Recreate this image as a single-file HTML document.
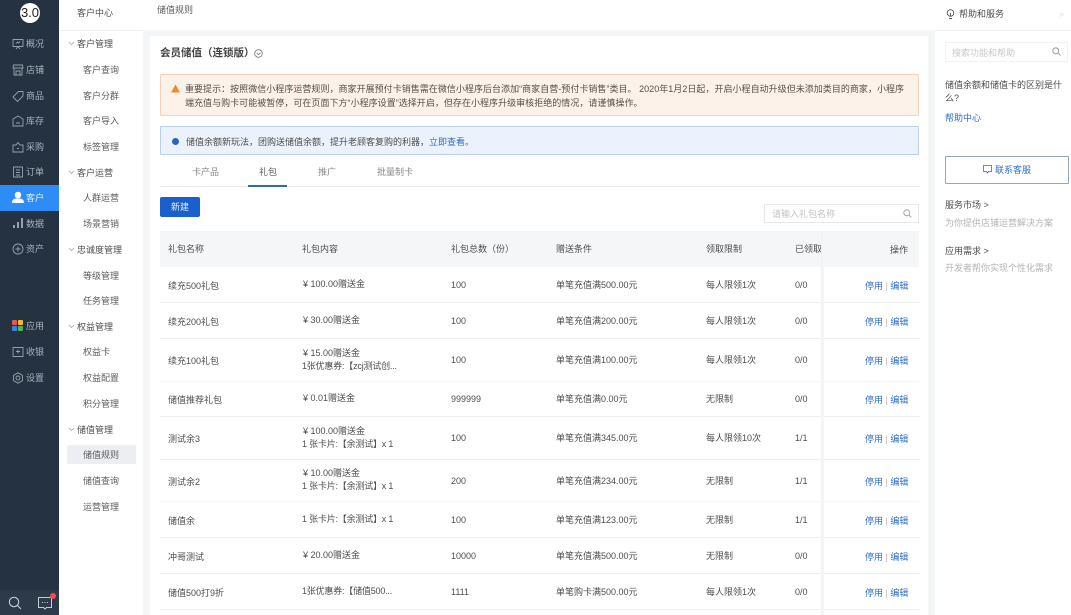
<!DOCTYPE html>
<html lang="zh"><head><meta charset="utf-8"><title>储值规则</title>
<style>
*{box-sizing:border-box}
html,body{margin:0;padding:0;width:1071px;height:615px;overflow:hidden;background:#f4f5f6}
body{position:relative;font:9px/12px "Liberation Sans","Noto Sans CJK SC",sans-serif;color:#4d4d4d;filter:blur(.3px)}
.b{position:absolute}
.t{position:absolute;white-space:nowrap;line-height:12px;height:12px;margin-top:1px}
.n{color:#a9b2bd;left:26px}
.s{left:83px;color:#5c5c5c}
.g{left:77px;color:#4d4d4d}
.a{color:#2f6fc4}
.c2{letter-spacing:-.2px}
.l{position:absolute;left:160px;width:760px;height:1px;background:#eeeff1}
svg{position:absolute;overflow:visible}
.ic{fill:none;stroke:#97a1ad;stroke-width:.9}
.ch{fill:none;stroke:#a8a8a8;stroke-width:.8}
</style></head><body>

<div class="b" style="left:0;top:0;width:59px;height:615px;background:#253241"></div>
<div class="b" style="left:0;top:590px;width:59px;height:25px;background:#2d3a49"></div>
<div class="b" style="left:0;top:185px;width:59px;height:26px;background:#2d8cf5"></div>
<div class="b" style="left:20px;top:3px;width:20px;height:20px;border-radius:50%;background:#fff"></div>
<div class="t" style="left:20px;top:6px;width:20px;text-align:center;font-size:13px;color:#222">3.0</div>

<svg class="ic" style="left:12px;top:38px" width="12" height="12" viewBox="0 0 12 12"><path d="M1 1.500h10v7H1zM4 11l2-2.500 2 2.500M4 5.500l1.500-1.500 1 1 1.500-1.500"/></svg>
<svg class="ic" style="left:12px;top:64px" width="12" height="12" viewBox="0 0 12 12"><path d="M1.500 1h9l.5 3H1zM2 4v7h8V4M4 11V7h4v4"/></svg>
<svg class="ic" style="left:12px;top:90px" width="12" height="12" viewBox="0 0 12 12"><path d="M1 7l5.500-5.500H11V6l-5.500 5.500z"/></svg>
<svg class="ic" style="left:12px;top:115px" width="12" height="12" viewBox="0 0 12 12"><path d="M1 4l5-3 5 3v7H1zM4 8h4"/></svg>
<svg class="ic" style="left:12px;top:141px" width="12" height="12" viewBox="0 0 12 12"><path d="M1 4h3l2-2.500L8 4h3v7H1zM5 7.500h2"/></svg>
<svg class="ic" style="left:12px;top:166px" width="12" height="12" viewBox="0 0 12 12"><path d="M1.500 1h9v10h-9zM4 4h4M4 6.500h4M4 9h4"/></svg>
<svg style="left:12px;top:191px" width="12" height="13" viewBox="0 0 12 13"><circle cx="6" cy="4" r="3.300" fill="#fff"/><path d="M0 12c0-3 2-4.500 4-4.500h4c2 0 4 1.500 4 4.500z" fill="#fff"/></svg>
<svg style="left:12px;top:217px" width="12" height="12" viewBox="0 0 12 12"><path d="M1 8h2v3H1zM5 5h2v6H5zM9 1h2v10H9z" fill="#97a1ad"/></svg>
<svg class="ic" style="left:12px;top:243px" width="12" height="12" viewBox="0 0 12 12"><circle cx="6" cy="6" r="5"/><path d="M6 3.500v5M3.500 6h5"/></svg>
<svg style="left:12px;top:320px" width="11" height="11" viewBox="0 0 11 11"><rect width="5" height="5" rx="1" fill="#e8584f"/><rect x="6" width="5" height="5" rx="1" fill="#f3b92f"/><rect y="6" width="5" height="5" rx="1" fill="#3b82e6"/><rect x="6" y="6" width="5" height="5" rx="1" fill="#4fb45a"/></svg>
<svg class="ic" style="left:12px;top:346px" width="12" height="12" viewBox="0 0 12 12"><path d="M1 1.500h10v9H1zM6 3.500v4M4 5.500h4"/></svg>
<svg class="ic" style="left:12px;top:372px" width="12" height="12" viewBox="0 0 12 12"><circle cx="6" cy="6" r="2"/><path d="M6 .800l4.500 2.600v5.200L6 11.200 1.500 8.600V3.400z"/></svg>

<span class="t n" style="top:37px">概况</span>
<span class="t n" style="top:63px">店铺</span>
<span class="t n" style="top:89px">商品</span>
<span class="t n" style="top:114px">库存</span>
<span class="t n" style="top:140px">采购</span>
<span class="t n" style="top:165px">订单</span>
<span class="t n" style="top:191px;color:#eaf3ff">客户</span>
<span class="t n" style="top:217px">数据</span>
<span class="t n" style="top:242px">资产</span>
<span class="t n" style="top:319px">应用</span>
<span class="t n" style="top:345px">收银</span>
<span class="t n" style="top:371px">设置</span>

<svg style="left:8px;top:596px" width="14" height="14" viewBox="0 0 14 14" fill="none" stroke="#c5ccd4" stroke-width="1.100"><circle cx="6" cy="6" r="4.700"/><path d="M9.500 9.500l3.500 3.500"/></svg>
<svg style="left:38px;top:597px" width="14" height="13" viewBox="0 0 14 13" fill="none" stroke="#c5ccd4" stroke-width="1"><path d="M.5.500h13v10h-5L7 12l-1.500-1.500h-5z"/><path d="M4 5.500h1M6.500 5.500h1M9 5.500h1"/></svg>
<div class="b" style="left:50px;top:593px;width:6px;height:6px;border-radius:50%;background:#ee4c55"></div>

<div class="b" style="left:59px;top:0;width:84px;height:615px;background:#fff"></div>
<div class="b" style="left:59px;top:30px;width:84px;height:1px;background:#f0f0f0"></div>
<div class="b" style="left:67px;top:445px;width:69px;height:19px;background:#edeef1;border-radius:2px"></div>
<span class="t" style="left:77px;top:6px">客户中心</span>

<svg class="ch" style="left:68px;top:41px" width="7" height="5"><path d="M1 1l2.500 2.500L6 1"/></svg>
<svg class="ch" style="left:68px;top:170px" width="7" height="5"><path d="M1 1l2.500 2.500L6 1"/></svg>
<svg class="ch" style="left:68px;top:247px" width="7" height="5"><path d="M1 1l2.500 2.500L6 1"/></svg>
<svg class="ch" style="left:68px;top:324px" width="7" height="5"><path d="M1 1l2.500 2.500L6 1"/></svg>
<svg class="ch" style="left:68px;top:427px" width="7" height="5"><path d="M1 1l2.500 2.500L6 1"/></svg>

<span class="t g" style="top:37px">客户管理</span>
<span class="t s" style="top:63px">客户查询</span>
<span class="t s" style="top:89px">客户分群</span>
<span class="t s" style="top:114px">客户导入</span>
<span class="t s" style="top:140px">标签管理</span>
<span class="t g" style="top:166px">客户运营</span>
<span class="t s" style="top:191px">人群运营</span>
<span class="t s" style="top:217px">场景营销</span>
<span class="t g" style="top:243px">忠诚度管理</span>
<span class="t s" style="top:269px">等级管理</span>
<span class="t s" style="top:294px">任务管理</span>
<span class="t g" style="top:320px">权益管理</span>
<span class="t s" style="top:345px">权益卡</span>
<span class="t s" style="top:371px">权益配置</span>
<span class="t s" style="top:397px">积分管理</span>
<span class="t g" style="top:423px">储值管理</span>
<span class="t s" style="top:448px">储值规则</span>
<span class="t s" style="top:474px">储值查询</span>
<span class="t s" style="top:500px">运营管理</span>

<div class="b" style="left:143px;top:0;width:792px;height:30px;background:#fff"></div>
<span class="t" style="left:157px;top:3px;color:#5c5c5c">储值规则</span>

<div class="b" style="left:150px;top:36px;width:778px;height:579px;background:#fff"></div>
<span class="t" style="left:160px;top:46px;font-size:10.500px;font-weight:700;color:#444">会员储值（连锁版）</span>
<svg style="left:254px;top:49px" width="9" height="9" viewBox="0 0 9 9" fill="none" stroke="#777" stroke-width=".8"><circle cx="4.500" cy="4.500" r="3.800"/><path d="M2.700 3.800l1.800 1.800 1.800-1.800"/></svg>

<div class="b" style="left:160px;top:74px;width:759px;height:42px;background:#fdf2e9;border:1px solid #f5d2b5;border-radius:2px"></div>
<svg style="left:171px;top:84px" width="9" height="9" viewBox="0 0 9 9"><path d="M4.500.500L9 8.500H0z" fill="#ee8a2c"/></svg>
<span class="t" style="left:185px;top:82px;letter-spacing:.03px;color:#555049">重要提示：按照微信小程序运营规则，商家开展预付卡销售需在微信小程序后台添加“商家自营-预付卡销售”类目。 2020年1月2日起，开启小程自动升级但未添加类目的商家，小程序</span>
<span class="t" style="left:185px;top:96px;letter-spacing:.03px;color:#555049">端充值与购卡可能被暂停，可在页面下方“小程序设置”选择开启，但存在小程序升级审核拒绝的情况，请谨慎操作。</span>

<div class="b" style="left:160px;top:126px;width:759px;height:29px;background:#ebf2fb;border:1px solid #bccfe9;border-radius:1px"></div>
<div class="b" style="left:172px;top:138px;width:7px;height:7px;border-radius:50%;background:#2a64c0"></div>
<span class="t" style="left:186px;top:135px;color:#4d4d4d">储值余额新玩法，团购送储值余额，提升老顾客复购的利器，<span class="a">立即查看。</span></span>

<span class="t" style="left:192px;top:165px;color:#888">卡产品</span>
<span class="t" style="left:259px;top:165px;color:#5c5c5c">礼包</span>
<span class="t" style="left:318px;top:165px;color:#888">推广</span>
<span class="t" style="left:377px;top:165px;color:#888">批量制卡</span>
<div class="b" style="left:160px;top:186px;width:760px;height:1px;background:#e8e9eb"></div>
<div class="b" style="left:248px;top:185px;width:39px;height:2px;background:#2a6db0"></div>

<div class="b" style="left:160px;top:197px;width:40px;height:20px;background:#1a5fce;border-radius:2px"></div>
<span class="t" style="left:160px;top:200px;width:40px;text-align:center;color:#e8f0fc">新建</span>

<div class="b" style="left:764px;top:204px;width:155px;height:19px;border:1px solid #e6e7e9"></div>
<span class="t" style="left:772px;top:207px;color:#c2c2c2">请输入礼包名称</span>
<svg style="left:903px;top:209px" width="9" height="9" viewBox="0 0 9 9" fill="none" stroke="#999" stroke-width=".8"><circle cx="3.800" cy="3.800" r="3"/><path d="M6 6l2.500 2.500"/></svg>

<div class="b" style="left:160px;top:231px;width:759px;height:36px;background:#f5f6f8"></div>
<div class="l" style="top:302px"></div><div class="l" style="top:338px"></div>
<div class="l" style="top:381px;background:#f6f6f7"></div><div class="l" style="top:416px"></div>
<div class="l" style="top:459px"></div><div class="l" style="top:501px;background:#f6f6f7"></div>
<div class="l" style="top:537px"></div><div class="l" style="top:573px"></div><div class="l" style="top:609px"></div>

<span class="t" style="left:168px;top:242px">礼包名称</span>
<span class="t" style="left:302px;top:242px">礼包内容</span>
<span class="t" style="left:451px;top:242px">礼包总数（份）</span>
<span class="t" style="left:556px;top:242px">赠送条件</span>
<span class="t" style="left:706px;top:242px">领取限制</span>
<span class="t" style="left:795px;top:242px">已领取</span>
<span class="t" style="left:890px;top:243px">操作</span>

<span class="t" style="left:168px;top:279px">续充500礼包</span>
<span class="t" style="left:303px;top:277px">¥ 100.00赠送金</span>
<span class="t" style="left:451px;top:278px">100</span>
<span class="t" style="left:556px;top:278px">单笔充值满500.00元</span>
<span class="t" style="left:706px;top:278px">每人限领1次</span>
<span class="t" style="left:795px;top:278px">0/0</span>
<span class="t a" style="left:865px;top:279px">停用 <span style="color:#bbb">|</span> 编辑</span>

<span class="t" style="left:168px;top:315px">续充200礼包</span>
<span class="t" style="left:303px;top:313px">¥ 30.00赠送金</span>
<span class="t" style="left:451px;top:314px">100</span>
<span class="t" style="left:556px;top:314px">单笔充值满200.00元</span>
<span class="t" style="left:706px;top:314px">每人限领1次</span>
<span class="t" style="left:795px;top:314px">0/0</span>
<span class="t a" style="left:865px;top:315px">停用 <span style="color:#bbb">|</span> 编辑</span>

<span class="t" style="left:168px;top:354px">续充100礼包</span>
<span class="t" style="left:303px;top:346px">¥ 15.00赠送金</span>
<span class="t c2" style="left:302px;top:359px">1张优惠券:【zcj测试创...</span>
<span class="t" style="left:451px;top:353px">100</span>
<span class="t" style="left:556px;top:353px">单笔充值满100.00元</span>
<span class="t" style="left:706px;top:353px">每人限领1次</span>
<span class="t" style="left:795px;top:353px">0/0</span>
<span class="t a" style="left:865px;top:354px">停用 <span style="color:#bbb">|</span> 编辑</span>

<span class="t" style="left:168px;top:393px">储值推荐礼包</span>
<span class="t" style="left:303px;top:391px">¥ 0.01赠送金</span>
<span class="t" style="left:451px;top:392px">999999</span>
<span class="t" style="left:556px;top:392px">单笔充值满0.00元</span>
<span class="t" style="left:706px;top:392px">无限制</span>
<span class="t" style="left:795px;top:392px">0/0</span>
<span class="t a" style="left:865px;top:393px">停用 <span style="color:#bbb">|</span> 编辑</span>

<span class="t" style="left:168px;top:432px">测试余3</span>
<span class="t" style="left:303px;top:424px">¥ 100.00赠送金</span>
<span class="t c2" style="left:302px;top:437px">1 张卡片:【余测试】x 1</span>
<span class="t" style="left:451px;top:431px">100</span>
<span class="t" style="left:556px;top:431px">单笔充值满345.00元</span>
<span class="t" style="left:706px;top:431px">每人限领10次</span>
<span class="t" style="left:795px;top:431px">1/1</span>
<span class="t a" style="left:865px;top:432px">停用 <span style="color:#bbb">|</span> 编辑</span>

<span class="t" style="left:168px;top:475px">测试余2</span>
<span class="t" style="left:303px;top:466px">¥ 10.00赠送金</span>
<span class="t c2" style="left:302px;top:479px">1 张卡片:【余测试】x 1</span>
<span class="t" style="left:451px;top:474px">200</span>
<span class="t" style="left:556px;top:474px">单笔充值满234.00元</span>
<span class="t" style="left:706px;top:474px">无限制</span>
<span class="t" style="left:795px;top:474px">1/1</span>
<span class="t a" style="left:865px;top:475px">停用 <span style="color:#bbb">|</span> 编辑</span>

<span class="t" style="left:168px;top:514px">储值余</span>
<span class="t c2" style="left:302px;top:512px">1 张卡片:【余测试】x 1</span>
<span class="t" style="left:451px;top:513px">100</span>
<span class="t" style="left:556px;top:513px">单笔充值满123.00元</span>
<span class="t" style="left:706px;top:513px">无限制</span>
<span class="t" style="left:795px;top:513px">1/1</span>
<span class="t a" style="left:865px;top:514px">停用 <span style="color:#bbb">|</span> 编辑</span>

<span class="t" style="left:168px;top:550px">冲哥测试</span>
<span class="t" style="left:303px;top:548px">¥ 20.00赠送金</span>
<span class="t" style="left:451px;top:549px">10000</span>
<span class="t" style="left:556px;top:549px">单笔充值满500.00元</span>
<span class="t" style="left:706px;top:549px">无限制</span>
<span class="t" style="left:795px;top:549px">0/0</span>
<span class="t a" style="left:865px;top:550px">停用 <span style="color:#bbb">|</span> 编辑</span>

<span class="t" style="left:168px;top:586px">储值500打9折</span>
<span class="t c2" style="left:302px;top:584px">1张优惠券:【储值500...</span>
<span class="t" style="left:451px;top:585px">1111</span>
<span class="t" style="left:556px;top:585px">单笔购卡满500.00元</span>
<span class="t" style="left:706px;top:585px">每人限领1次</span>
<span class="t" style="left:795px;top:585px">0/0</span>
<span class="t a" style="left:865px;top:586px">停用 <span style="color:#bbb">|</span> 编辑</span>

<div class="b" style="left:821px;top:231px;width:3px;height:384px;background:linear-gradient(90deg,#f0f1f3,#f6f7f8)"></div>

<div class="b" style="left:935px;top:0;width:136px;height:615px;background:#fff"></div>
<div class="b" style="left:935px;top:30px;width:136px;height:1px;background:#f0f0f0"></div>
<svg style="left:946px;top:9px" width="9" height="11" viewBox="0 0 9 11" fill="none" stroke="#555" stroke-width=".9"><circle cx="4.500" cy="4" r="3.300"/><path d="M3 9.500h3M4.500 4v3"/></svg>
<span class="t" style="left:959px;top:7px">帮助和服务</span>
<span class="t" style="left:1059px;top:7px;color:#ddd">»</span>

<div class="b" style="left:945px;top:42px;width:123px;height:20px;border:1px solid #f2f2f3"></div>
<span class="t" style="left:952px;top:46px;color:#c8c8c8">搜索功能和帮助</span>
<svg style="left:1052px;top:47px" width="9" height="9" viewBox="0 0 9 9" fill="none" stroke="#888" stroke-width=".8"><circle cx="3.800" cy="3.800" r="3"/><path d="M6 6l2.500 2.500"/></svg>

<span class="t" style="left:945px;top:78px">储值余额和储值卡的区别是什</span>
<span class="t" style="left:945px;top:91px">么?</span>
<span class="t a" style="left:945px;top:111px">帮助中心</span>

<div class="b" style="left:945px;top:156px;width:124px;height:28px;border:1px solid #8fa8c6;border-radius:1px"></div>
<svg style="left:983px;top:165px" width="9" height="9" viewBox="0 0 9 9" fill="none" stroke="#2f6fc4" stroke-width=".8"><path d="M.500.500h8v6h-3L4.500 8l-1-1.500h-3z"/></svg>
<span class="t a" style="left:995px;top:163px">联系客服</span>

<span class="t" style="left:945px;top:198px">服务市场 &gt;</span>
<span class="t" style="left:945px;top:216px;color:#b4b4b4">为你提供店铺运营解决方案</span>
<span class="t" style="left:945px;top:244px">应用需求 &gt;</span>
<span class="t" style="left:945px;top:261px;color:#b4b4b4">开发者帮你实现个性化需求</span>
</body></html>
